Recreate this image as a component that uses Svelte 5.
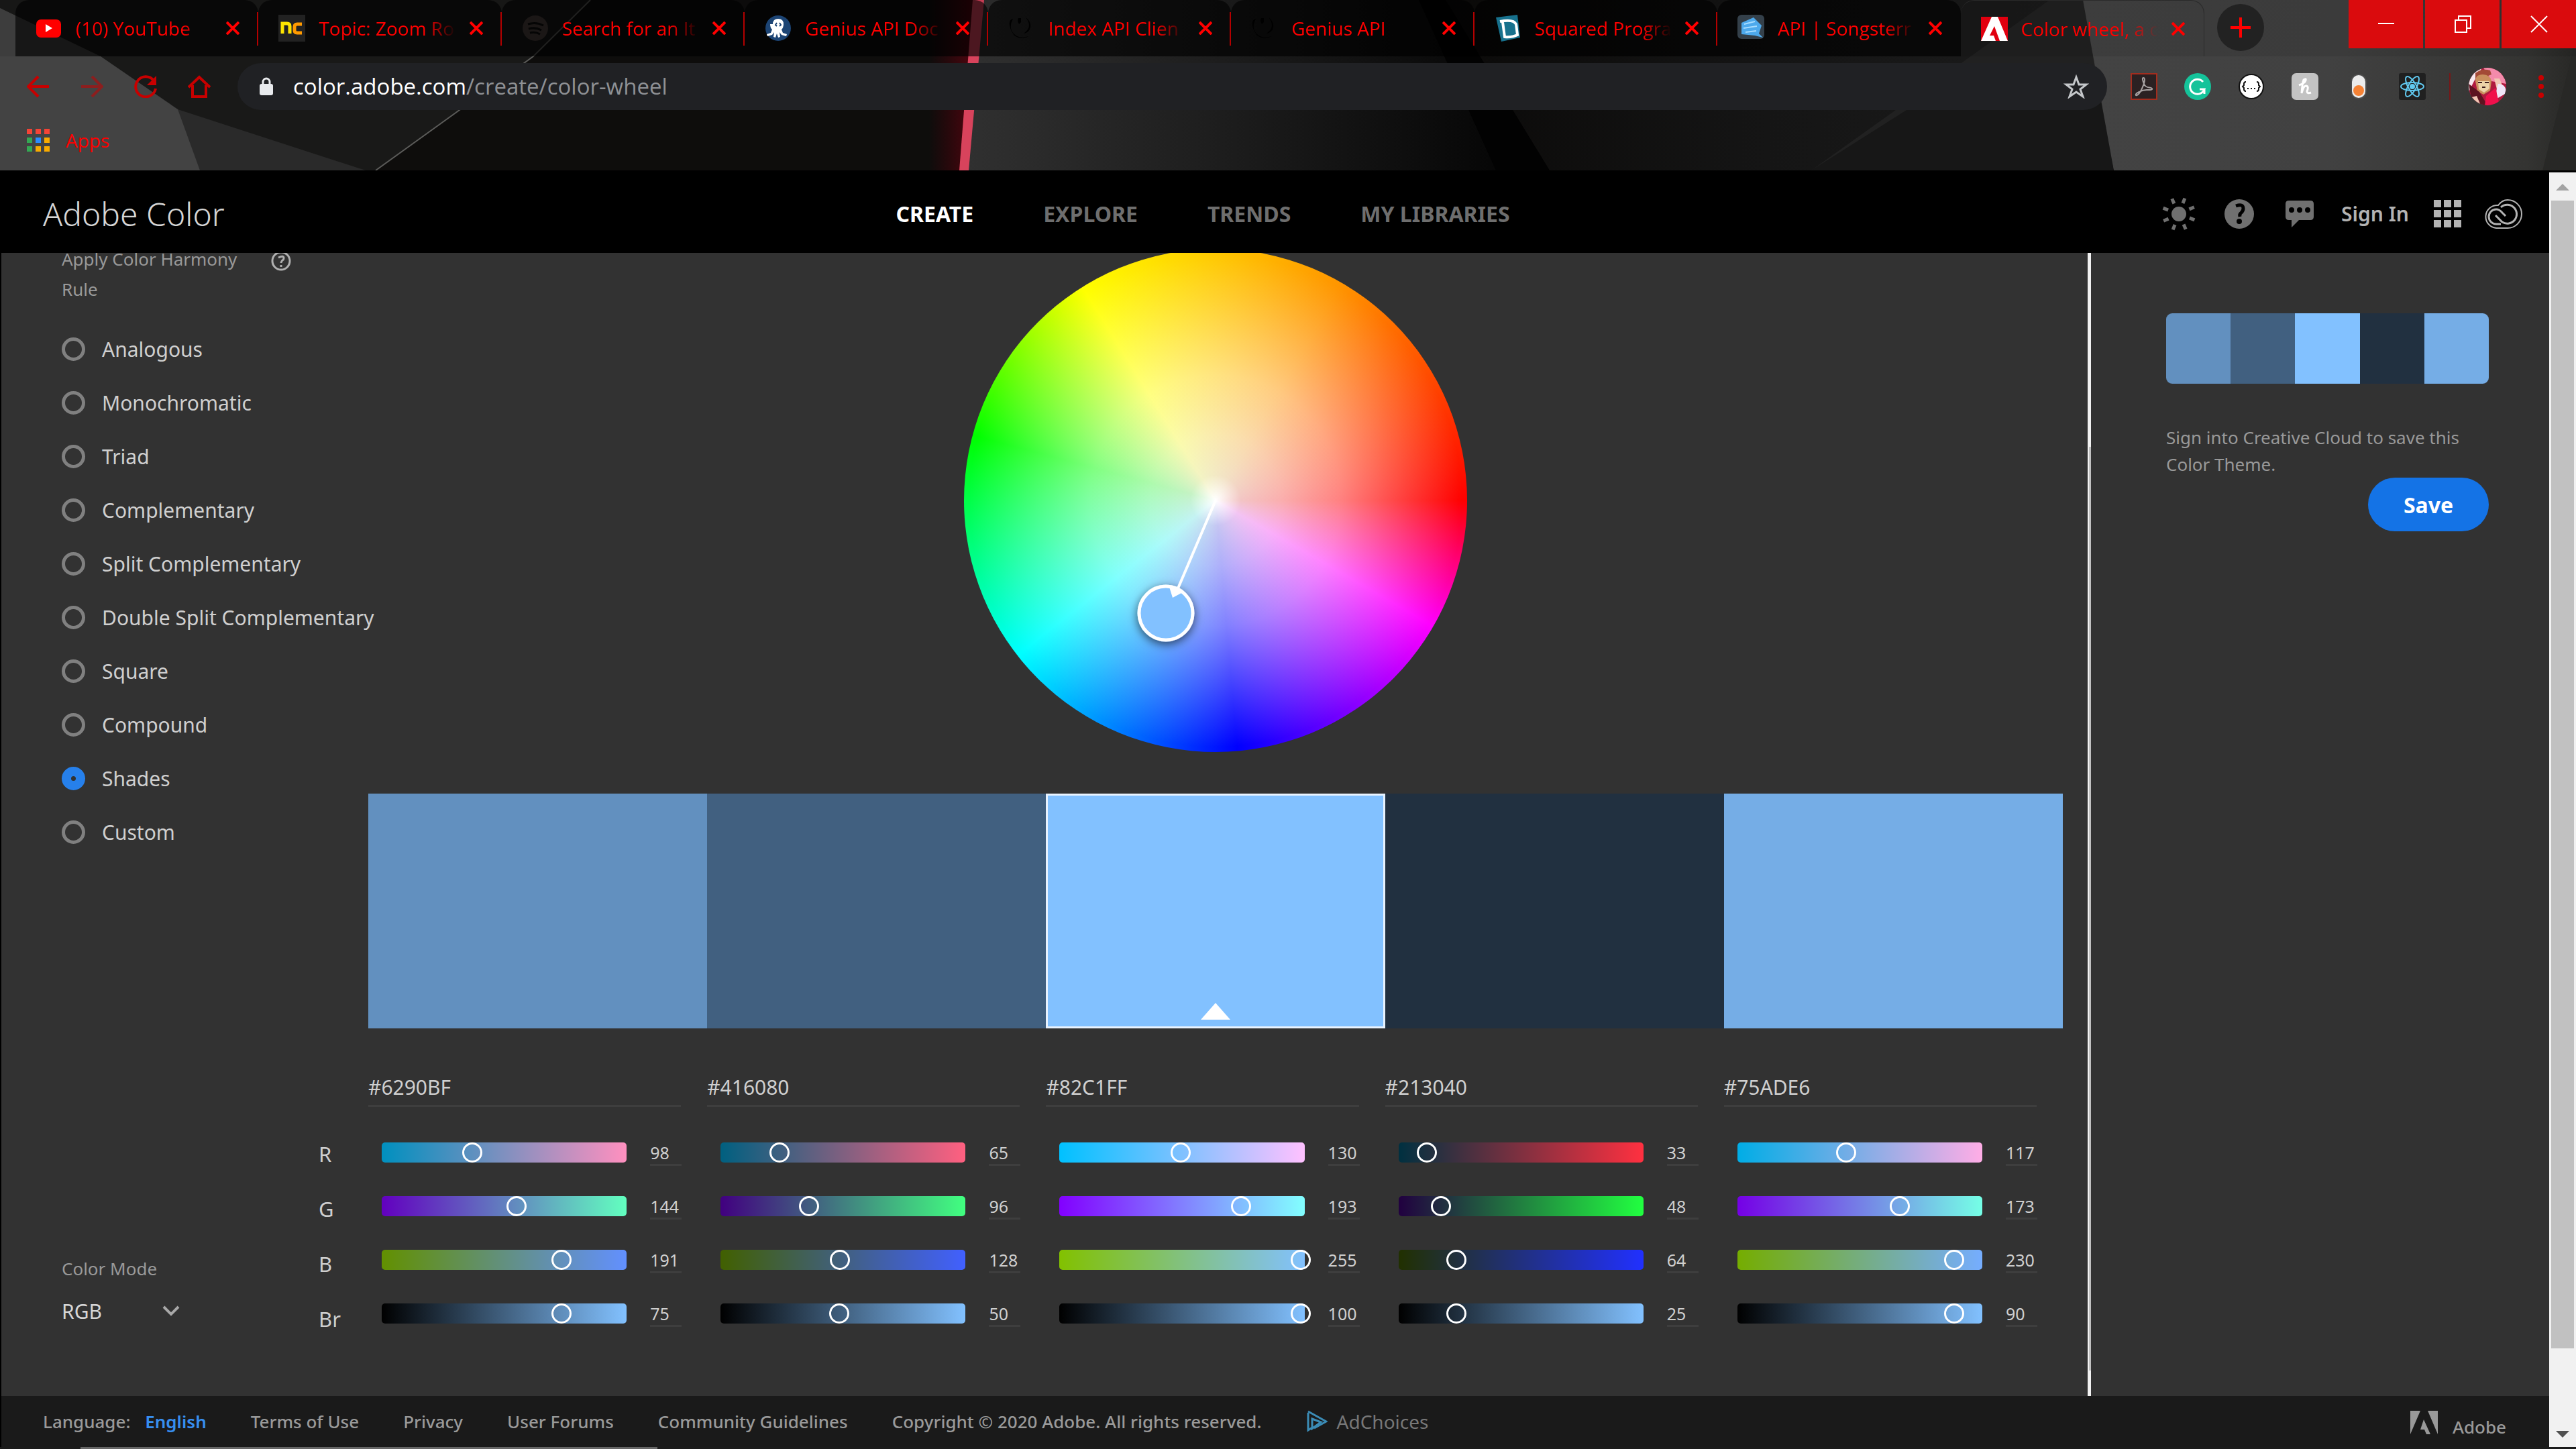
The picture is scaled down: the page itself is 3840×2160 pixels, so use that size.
<script>
  const tabs = [
    { title: '(10) YouTube', icon: 'youtube' },
    { title: 'Topic: Zoom Ro', icon: 'nc' },
    { title: 'Search for an It', icon: 'spotify' },
    { title: 'Genius API Doc', icon: 'octo' },
    { title: 'Index API Clien', icon: 'genius' },
    { title: 'Genius API', icon: 'genius' },
    { title: 'Squared Progra', icon: 'squared' },
    { title: 'API | Songsterr', icon: 'songsterr' },
    { title: 'Color wheel, a c', icon: 'adobe', active: true }
  ];

  const rules = ['Analogous', 'Monochromatic', 'Triad', 'Complementary', 'Split Complementary',
    'Double Split Complementary', 'Square', 'Compound', 'Shades', 'Custom'];
  let rule = $state('Shades');

  const theme = [
    { hex: '#6290BF', rgb: [98, 144, 191], br: 75 },
    { hex: '#416080', rgb: [65, 96, 128], br: 50 },
    { hex: '#82C1FF', rgb: [130, 193, 255], br: 100, base: true },
    { hex: '#213040', rgb: [33, 48, 64], br: 25 },
    { hex: '#75ADE6', rgb: [117, 173, 230], br: 90 }
  ];
  const channels = ['R', 'G', 'B', 'Br'];

  function track(color, i) {
    if (i === 3) return 'linear-gradient(to right, #000, #82c1ff)';
    const lo = [...color.rgb];
    const hi = [...color.rgb];
    lo[i] = 0;
    hi[i] = 255;
    return `linear-gradient(to right, rgb(${lo}), rgb(${hi}))`;
  }
  const level = (color, i) => (i === 3 ? color.br : color.rgb[i]);

  const nav = ['CREATE', 'EXPLORE', 'TRENDS', 'MY LIBRARIES'];
  const links = ['Terms of Use', 'Privacy', 'User Forums', 'Community Guidelines'];
  const dots = [0, 1, 2];
  const appColors = ['#f44336', '#f44336', '#f44336', '#34a853', '#2a8cff', '#f9ab00', '#34a853', '#f9ab00', '#f9ab00'];
</script>

{#snippet favicon(name)}
  <svg class="fav" viewBox="0 0 40 40" aria-hidden="true">
    {#if name === 'youtube'}
      <rect x="1" y="7" width="37" height="27" rx="7" fill="#f00" />
      <path d="M15 14v12l10-6z" fill="#fff" />
    {:else if name === 'nc'}
      <rect width="40" height="40" fill="#222" />
      <path d="M6 28V13h7q4 0 4 4v11" fill="none" stroke="#fde400" stroke-width="5" />
      <path d="M35 14h-7q-4 0-4 4v5q0 4 4 4h7" fill="none" stroke="#ff9a00" stroke-width="5" />
    {:else if name === 'spotify'}
      <circle cx="20" cy="20" r="19" fill="#1b1716" />
      <path d="M9 14q12-4 23 2M10 21q10-3 19 2M12 27q8-2 15 2" fill="none" stroke="#050505" stroke-width="3" />
    {:else if name === 'octo'}
      <circle cx="20" cy="20" r="19" fill="#1c4474" />
      <path d="M12 14q0-8 8-8t8 8q0 5-3 8l2 5 6 2-1 3-7-2-3-4 1 7-3 1-2-6-2 6-3-1 1-7-3 4-7 2-1-3 6-2 2-5q-3-3-3-8z" fill="#fff" />
      <path d="M18 12l-2 3 2 2M22 12l2 3-2 2" fill="none" stroke="#1c4474" stroke-width="2" />
    {:else if name === 'genius'}
      <path d="M7 6q-7 13 1 22t23 4q-8 4-16 2T3 20t4-14zM15 5h4v6l-3 3q-3-4-1-9zM26 4q8 6 7 14t-10 10q8-6 8-12t-5-12z" fill="#000" />
    {:else if name === 'squared'}
      <path d="M2 4l32-4 4 34-28 6z" fill="#17718d" />
      <path d="M8 10q20-4 24 4l2 16q-8 4-19 3l-3-22" fill="none" stroke="#fff" stroke-width="4" />
    {:else if name === 'songsterr'}
      <rect width="40" height="36" rx="6" fill="#34404a" />
      <path d="M6 12l18-8 12 12-4 12 6 6-12-3-20-2z" fill="#4da9ec" />
      <path d="M10 14l16-4M9 20l20-3M12 26l16-2" stroke="#a6dcff" stroke-width="2" />
    {:else}
      <rect y="2" width="40" height="36" fill="#fff" />
      <path d="M0 2h16L0 38zM40 2v36L25 2zM20 16l8 22h-6l-3-8h-6z" fill="#e1000f" />
    {/if}
  </svg>
{/snippet}

<div class="app">
  <header class="browser">
    <svg class="skin" viewBox="0 0 3840 254" preserveAspectRatio="none" aria-hidden="true">
      <defs>
        <linearGradient id="slab"><stop offset="0" stop-color="#303030" /><stop offset="0.5" stop-color="#1c1c1c" /><stop offset="1" stop-color="#060606" /></linearGradient>
        <linearGradient id="far"><stop offset="0" stop-color="#0a0908" /><stop offset="0.5" stop-color="#151515" /><stop offset="1" stop-color="#1c1c1c" /></linearGradient>
        <linearGradient id="steel"><stop offset="0" stop-color="#434343" /><stop offset="0.5" stop-color="#414141" /><stop offset="0.9" stop-color="#343432" /><stop offset="1" stop-color="#282826" /></linearGradient>
        <linearGradient id="glow"><stop offset="0" stop-color="#4a000a" stop-opacity="0" /><stop offset="1" stop-color="#5a0510" /></linearGradient>
      </defs>
      <rect width="3840" height="254" fill="#0e0d0c" />
      <path d="M0 0H880L795 84L685 164L560 254H0z" fill="#191918" />
      <path d="M0 12L265 163L545 254H0z" fill="#2a2a2a" />
      <path d="M0 12L150 84L265 163L298 254H0z" fill="#434343" />
      <path d="M880 0L795 84L685 164L560 254" fill="none" stroke="#5c5c5a" stroke-width="2" />
      <path d="M1385 0H1460L1436 254H1385z" fill="url(#glow)" />
      <path d="M1462 0H2115L2240 254H1440z" fill="url(#slab)" />
      <path d="M1450 0h17l-23 254h-14z" fill="#d8435c" />
      <path d="M2115 0H3110L3150 254H2310z" fill="url(#far)" />
      <path d="M2115 0h40l155 254h-80z" fill="#020202" />
      <path d="M3055 0H3110L3150 254H2700z" fill="#212121" />
      <path d="M2880 140H3140L3150 254H2700z" fill="#171717" />
      <path d="M3105 0H3840V254H3151z" fill="url(#steel)" />
      <path d="M3840 60V254H3790z" fill="#282826" />
    </svg>
    <div class="strip">
      <div class="tabs">
        {#each tabs as tab}
          <div class="tab" class:active={tab.active}>
            {@render favicon(tab.icon)}
            <button class="title">{tab.title}</button>
            <button class="close" aria-label={`Close ${tab.title}`}>
              <svg viewBox="0 0 20 20"><path d="M1 1l18 18M19 1L1 19" /></svg>
            </button>
          </div>
        {/each}
      </div>
      <button class="newtab" aria-label="New tab">
        <svg viewBox="0 0 30 30"><path d="M15 0v30M0 15h30" /></svg>
      </button>
      <div class="window">
        <button aria-label="Minimize"><svg viewBox="0 0 26 26"><path d="M1 12h24" /></svg></button>
        <button aria-label="Restore"><svg viewBox="0 0 26 26"><path d="M2 7h17v18H2zM7 7V1h18v18h-6" /></svg></button>
        <button aria-label="Close window"><svg viewBox="0 0 26 26"><path d="M1 1l24 24M25 1L1 25" /></svg></button>
      </div>
    </div>
    <div class="toolbar">
      <div class="moves">
        <button aria-label="Back"><svg viewBox="0 0 34 34"><path d="M33 17H3M17 2L2 17l15 15" /></svg></button>
        <button aria-label="Forward" class="dim"><svg viewBox="0 0 34 34"><path d="M1 17h30M17 2l15 15-15 15" /></svg></button>
        <button aria-label="Reload"><svg viewBox="0 0 34 34"><path d="M29 8A15 15 0 1 0 32 20" /><path class="solid" d="M33 1v14H19z" /></svg></button>
        <button aria-label="Home"><svg viewBox="0 0 34 34"><path d="M7 15v17h20V15M1 18L17 3l16 15" /></svg></button>
      </div>
      <div class="address">
        <svg class="lock" viewBox="0 0 20 28" aria-hidden="true"><rect y="10" width="20" height="17" rx="3" fill="#e8eaed" /><path d="M5 11V7a5 5 0 0 1 10 0v4" fill="none" stroke="#e8eaed" stroke-width="3" /></svg>
        <p class="url"><b>color.adobe.com</b>/create/color-wheel</p>
        <button class="star" aria-label="Bookmark this page">
          <svg viewBox="0 0 38 36"><path d="M19 4l4 11h11l-9 7 4 11-10-7-10 7 4-11-9-7h11z" fill="none" stroke="#c4c7ca" stroke-width="3" /></svg>
        </button>
      </div>
      <div class="extensions">
        <button aria-label="Acrobat"><svg viewBox="0 0 40 40"><rect x="1" y="1" width="38" height="38" fill="#2b2122" stroke="#a32d1e" stroke-width="2" /><path d="M19 7c4 0 1 10-2 16-3 7-7 11-9 10-2-3 9-8 16-8 6 0 9 0 8-2-2-3-9 1-12-7-2-5-3-9-1-9z" fill="none" stroke="#a8a2a2" stroke-width="2" /></svg></button>
        <button aria-label="Grammarly"><svg viewBox="0 0 40 40"><circle cx="20" cy="20" r="20" fill="#15c39a" /><path d="M28 13a11 11 0 1 0 2 11H23M30 24v7" fill="none" stroke="#fff" stroke-width="3" /></svg></button>
        <button aria-label="JSON viewer"><svg viewBox="0 0 40 40"><circle cx="20" cy="20" r="18" fill="#fff" stroke="#111" stroke-width="2" /><path d="M12 13q-3 0-3 3v2l-2 2 2 2v2q0 3 3 3M28 13q3 0 3 3v2l2 2-2 2v2q0 3-3 3M14 23h2M19 23h2M24 23h2" fill="none" stroke="#111" stroke-width="2" /></svg></button>
        <button aria-label="Honey"><svg viewBox="0 0 40 40"><rect width="40" height="40" rx="7" fill="#c3c3c3" /><path d="M11 18q9-3 10-7t-3-1q-2 5-3 20 3-12 7-11t1 8q0 4 6 2" fill="none" stroke="#fff" stroke-width="3" /></svg></button>
        <button aria-label="Toggle"><svg viewBox="0 0 40 40"><rect x="8" y="1" width="24" height="38" rx="12" fill="#4c4c4c" /><rect x="10" y="3" width="20" height="34" rx="10" fill="#ececec" /><circle cx="20" cy="26" r="8" fill="#f58235" /></svg></button>
        <button aria-label="React tools"><svg viewBox="0 0 40 40"><rect width="40" height="40" rx="3" fill="#202020" /><g fill="none" stroke="#61c9f0" stroke-width="2"><ellipse cx="20" cy="20" rx="17" ry="6" /><ellipse cx="20" cy="20" rx="17" ry="6" transform="rotate(60 20 20)" /><ellipse cx="20" cy="20" rx="17" ry="6" transform="rotate(120 20 20)" /></g><circle cx="20" cy="20" r="4" fill="#61c9f0" /></svg></button>
      </div>
      <span class="rule"></span>
      <button class="avatar" aria-label="Profile">
        <svg viewBox="0 0 56 56">
          <defs><clipPath id="face"><circle cx="28" cy="28" r="28" /></clipPath></defs>
          <g clip-path="url(#face)">
            <rect width="56" height="56" fill="#b01a3f" />
            <path d="M22 0h34v24L34 20z" fill="#f48bab" />
            <path d="M0 0h20L8 20 0 36z" fill="#f7e9ee" />
            <path d="M10 8q10-8 22-4l2 6-24 10z" fill="#a34a36" />
            <path d="M10 20q0-10 11-10t13 10l-2 14-10 6-9-5z" fill="#c98f5d" />
            <path d="M14 20h17v11l-8 6-8-5z" fill="#ecd3a8" />
            <path d="M14 22h6M24 22h6M20 29h5" stroke="#3b1c1c" stroke-width="2" />
            <path d="M38 16l8 0 4 10-8 6z" fill="#f2c6b4" />
            <path d="M44 24q12 0 12 14l-14 8q-2-14 2-22z" fill="#efe6f8" />
            <path d="M0 24l16 12 12 20H6z" fill="#5c1420" />
            <path d="M4 44l8-2 6 14H8z" fill="#f2c6b4" />
            <path d="M26 42l14-12 6 26H24z" fill="#f0104c" />
          </g>
        </svg>
      </button>
      <button class="menu" aria-label="Menu"><svg viewBox="0 0 8 34"><circle cx="4" cy="4" r="4" /><circle cx="4" cy="17" r="4" /><circle cx="4" cy="30" r="4" /></svg></button>
    </div>
    <div class="bookmarks">
      <a href="#apps">
        <svg viewBox="0 0 34 34" aria-hidden="true">
          {#each appColors as c, i}
            <rect x={(i % 3) * 13} y={Math.floor(i / 3) * 13} width="8" height="8" fill={c} />
          {/each}
        </svg>
        Apps
      </a>
    </div>
  </header>

  <div class="viewport">
    <div class="page">
      <header class="top">
        <a class="logo" href="#home">Adobe Color</a>
        <nav>
          {#each nav as item, i}
            <a href="#{item}" class:current={i === 0}>{item}</a>
          {/each}
        </nav>
        <div class="tools">
          <button aria-label="Appearance">
            <svg class="sun" viewBox="0 0 50 50">
              <circle cx="25" cy="25" r="11" />
              {#each [22, 67, 112, 157, 202, 247, 292, 337] as a}
                <rect x="22" y="0" width="5" height="8" transform="rotate({a} 25 25)" />
              {/each}
            </svg>
          </button>
          <button aria-label="Help">
            <svg class="help" viewBox="0 0 44 44"><circle cx="22" cy="22" r="22" /><path d="M17 10q11-4 11 4 0 3-3 6-3 2-2 6" fill="none" stroke="#000" stroke-width="5" /><circle cx="22" cy="33" r="4" fill="#000" /></svg>
          </button>
          <button aria-label="Feedback">
            <svg class="chat" viewBox="0 0 42 42"><path d="M5 1h32q5 0 5 5v19q0 5-5 5H20L9 41V30H5q-5 0-5-5V6q0-5 5-5z" />{#each dots as d}<circle cx={9 + d * 12} cy="15" r="4" fill="#000" />{/each}</svg>
          </button>
          <button class="signin">Sign In</button>
          <button aria-label="Apps">
            <svg class="grid" viewBox="0 0 41 41">{#each dots as r}{#each dots as c}<rect x={c * 15} y={r * 15} width="11" height="11" />{/each}{/each}</svg>
          </button>
          <button aria-label="Creative Cloud">
            <svg class="cloud" viewBox="0 0 56 44"><g fill="none" stroke="#b3b3b3"><path stroke-width="2" d="M17 43A16 16 0 0 1 20 9Q26 1 34 1a21 21 0 0 1 0 42z" /><path stroke-width="3" d="M24 37h-7a11 11 0 0 1 0-22q5 0 9 5l5 5M24 12a14 14 0 1 1 2 22L16 24" /></g></svg>
          </button>
        </div>
      </header>

      <main>
        <aside class="sidebar">
          <div class="heading">
            <h2>Apply Color Harmony Rule</h2>
            <button aria-label="About harmony rules"><svg viewBox="0 0 30 30"><circle cx="15" cy="15" r="13" /><path d="M11 10q8-4 8 1 0 2-2 3-2 2-2 4M15 21v3" /></svg></button>
          </div>
          <div class="rules" role="radiogroup" aria-label="Harmony rule">
            {#each rules as name}
              <label><input type="radio" name="rule" value={name} bind:group={rule} />{name}</label>
            {/each}
          </div>
          <div class="mode">
            <label for="mode">Color Mode</label>
            <div class="picker">
              <select id="mode"><option>RGB</option><option>CMYK</option><option>LAB</option></select>
              <svg viewBox="0 0 26 16" aria-hidden="true"><path d="M2 2l11 11L24 2" /></svg>
            </div>
          </div>
        </aside>

        <section class="canvas">
          <div class="wheelzone">
            <div class="wheel">
              <svg viewBox="0 0 750 750" aria-hidden="true">
                <defs><filter id="drop" x="-50%" y="-50%" width="200%" height="200%"><feDropShadow dx="0" dy="4" stdDeviation="7" flood-color="#000" flood-opacity="0.6" /></filter></defs>
                <circle cx="301" cy="543" r="40" fill="#82c1ff" stroke="#fff" stroke-width="5" filter="url(#drop)" />
                <path d="M375 375L319 506" stroke="#fff" stroke-width="4" />
                <path d="M306 504l20 8-15 8z" fill="#fff" />
              </svg>
            </div>
          </div>
          <div class="editor">
            <div class="channels">
              {#each channels as ch}<span>{ch}</span>{/each}
            </div>
            {#each theme as color}
              <div class="color">
                <button class="swatch" class:base={color.base} style="background: {color.hex}" aria-label={color.hex}>
                  {#if color.base}<svg viewBox="0 0 44 25"><path d="M22 0l22 25H0z" fill="#fff" /></svg>{/if}
                </button>
                <input class="hex" value={color.hex} aria-label="Hex value" />
                {#each channels as ch, i}
                  <div class="slider">
                    <div class="track" style="background: {track(color, i)}">
                      <input type="range" min="0" max={i === 3 ? 100 : 255} value={level(color, i)} aria-label={`${ch} of ${color.hex}`} />
                    </div>
                    <input class="value" value={level(color, i)} aria-label={`${ch} value of ${color.hex}`} />
                  </div>
                {/each}
              </div>
            {/each}
          </div>
        </section>

        <div class="divider"><span></span></div>

        <aside class="panel">
          <div class="palette">
            {#each theme as color}<span style="background: {color.hex}"></span>{/each}
          </div>
          <p>Sign into Creative Cloud to save this Color Theme.</p>
          <button class="save">Save</button>
        </aside>
      </main>

      <footer>
        <span class="lang">Language: <a href="#english">English</a></span>
        {#each links as link}<a href="#{link}">{link}</a>{/each}
        <span>Copyright © 2020 Adobe. All rights reserved.</span>
        <a class="choices" href="#adchoices">
          <svg viewBox="0 0 32 36" aria-hidden="true"><path d="M3 5v26l6-4V14l13 5-15 11" fill="none" stroke="#3b8bb5" stroke-width="3" /><path d="M3 3l27 15-18 10" fill="none" stroke="#3b8bb5" stroke-width="3" /></svg>
          AdChoices
        </a>
        <a class="brand" href="#adobe">
          <svg viewBox="0 0 41 35" aria-hidden="true"><path d="M0 0h15L0 35zM41 0v35L26 0zM20 13l10 22h-6l-3-7h-6z" fill="#999" /></svg>
          Adobe
        </a>
      </footer>
    </div>
    <div class="scrollbar" aria-hidden="true">
      <svg viewBox="0 0 20 10"><path d="M10 0l10 10H0z" fill="#a3a3a3" /></svg>
      <span></span>
      <svg viewBox="0 0 20 10"><path d="M10 10L0 0h20z" fill="#505050" /></svg>
    </div>
  </div>
  <div class="taskbar"><span></span></div>
</div>

<style>
  :global(body) { margin: 0; background: #323232; }
  .app, .app * { box-sizing: border-box; }
  .app { display: flex; flex-direction: column; min-height: 100vh; overflow: hidden; font-family: "Noto Sans", "Open Sans", sans-serif; font-size: 28px; color: #cfcfcf; }
  button { border: 0; padding: 0; margin: 0; background: none; font: inherit; color: inherit; display: flex; align-items: center; justify-content: center; }
  a { color: inherit; text-decoration: none; }
  svg { display: block; flex: none; }
  h2, p { margin: 0; font-weight: 400; }

  /* browser frame */
  .browser { position: relative; height: 254px; color: #f00; font-family: "Open Sans", "Noto Sans", sans-serif; }
  .skin { position: absolute; inset: 0; width: 100%; height: 100%; }
  .strip { position: relative; display: flex; height: 84px; padding-left: 23px; background: rgba(0, 0, 0, 0.08); }
  .tabs { display: flex; flex: 1; min-width: 0; }
  .tab { position: relative; flex: 1; min-width: 0; display: flex; align-items: center; gap: 20px; padding: 0 28px 0 30px; background: rgba(0, 0, 0, 0.62); border-radius: 20px 20px 0 0; }
  .tab:not(.active)::after { content: ""; position: absolute; right: 0; top: 18px; width: 2px; height: 50px; background: #b40000; }
  .tab:nth-last-child(2)::after { display: none; }
  .active { background: none; border: 1px solid #2a2a2a; border-bottom: 0; border-left: 0; }
  .fav { width: 40px; height: 40px; }
  .title { flex: 1; min-width: 0; justify-content: flex-start; overflow: hidden; white-space: nowrap; font-size: 28px; line-height: 44px; mask-image: linear-gradient(to right, #000 78%, transparent); }
  .close svg { width: 20px; height: 20px; stroke: #f00; stroke-width: 4; }
  .newtab { width: 70px; height: 70px; margin: 6px 126px 0 19px; border-radius: 50%; background: #222; }
  .newtab svg { width: 30px; height: 30px; stroke: #f00; stroke-width: 4; }
  .window { display: flex; gap: 3px; height: 72px; }
  .window button { width: 111px; background: #da0b0d; }
  .window svg { width: 26px; height: 26px; fill: none; stroke: #fff; stroke-width: 2; }
  .toolbar { position: relative; display: flex; align-items: center; height: 90px; padding: 0 48px 0 40px; }
  .moves { display: flex; gap: 46px; width: 314px; }
  .moves svg { width: 34px; height: 34px; fill: none; stroke: #c80000; stroke-width: 4; }
  .moves .solid { fill: #c80000; stroke: none; }
  .dim { opacity: 0.55; }
  .address { flex: 1; display: flex; align-items: center; height: 70px; padding: 0 27px 0 33px; border-radius: 35px; background: #202124; }
  .lock { width: 20px; height: 28px; }
  .url { flex: 1; margin-left: 30px; font-size: 33px; line-height: 44px; color: #8f9195; }
  .url b { font-weight: 400; color: #fff; }
  .star svg { width: 38px; height: 36px; }
  .extensions { display: flex; gap: 40px; margin-left: 35px; }
  .extensions svg { width: 40px; height: 40px; }
  .rule { width: 2px; height: 40px; margin: 0 27px 0 35px; background: #751818; }
  .avatar svg { width: 56px; height: 56px; }
  .menu { margin-left: 48px; }
  .menu svg { width: 8px; height: 34px; fill: #c80000; }
  .bookmarks { position: relative; display: flex; align-items: center; height: 70px; padding-left: 40px; }
  .bookmarks a { display: flex; align-items: center; gap: 24px; font-size: 28px; line-height: 40px; }
  .bookmarks svg { width: 34px; height: 34px; }

  /* page */
  .viewport { flex: 1; display: flex; background: #000; }
  .page { flex: 1; min-width: 0; display: flex; flex-direction: column; border-left: 2px solid #000; }
  .top { display: flex; align-items: center; height: 123px; padding: 6px 40px 0 62px; background: #000; }
  .logo { flex: 0 0 34.4%; font-size: 48px; font-weight: 300; line-height: 60px; color: #d6d6d6; }
  nav { display: flex; gap: 104px; font-size: 32px; font-weight: 700; color: #6e6e6e; line-height: 40px; }
  .current { color: #fff; }
  .tools { display: flex; align-items: center; margin-left: auto; color: #b3b3b3; fill: #707070; }
  .sun { width: 50px; height: 50px; margin-right: 43px; }
  .help { width: 44px; height: 44px; margin-right: 47px; }
  .chat { width: 42px; height: 42px; margin-right: 41px; }
  .signin { font-size: 30px; font-weight: 600; line-height: 40px; margin-right: 37px; }
  .grid { width: 41px; height: 41px; margin-right: 35px; fill: #b3b3b3; }
  .cloud { width: 56px; height: 44px; }

  main { flex: 1; display: flex; background: #323232; overflow: hidden; }
  .sidebar { flex: 0 0 470px; min-width: 0; display: flex; flex-direction: column; padding: 0 0 102px 90px; }
  .heading { display: flex; align-items: flex-start; margin-top: -13px; }
  .heading h2 { width: 312px; font-size: 26px; line-height: 45px; color: #999; }
  .heading svg { width: 30px; height: 30px; margin-top: 10px; fill: none; stroke: #b0b0b0; stroke-width: 3; }
  .rules { margin-top: 26px; display: flex; flex-direction: column; }
  .rules label { display: flex; align-items: center; gap: 25px; height: 80px; font-size: 30px; white-space: nowrap; }
  .rules input { appearance: none; width: 35px; height: 35px; margin: 0; flex: none; border: 5px solid #808080; border-radius: 50%; }
  .rules input:checked { border: 14px solid #2680eb; }
  .mode { margin-top: auto; }
  .mode label { display: block; font-size: 26px; line-height: 36px; color: #999; }
  .picker { display: flex; align-items: center; width: 176px; height: 50px; margin-top: 20px; }
  .picker select { appearance: none; flex: 1; min-width: 0; border: 0; padding: 0; background: none; font: inherit; font-size: 30px; color: #d6d6d6; }
  .picker svg { width: 26px; height: 16px; fill: none; stroke: #a8a8a8; stroke-width: 4; }

  .canvas { flex: 1; min-width: 0; padding-right: 37px; }
  .wheelzone { height: 806px; padding-left: 77px; overflow: hidden; }
  .wheel { width: 750px; height: 750px; margin: -6px auto 0; border-radius: 50%; background:
    radial-gradient(closest-side, #fff, rgba(240, 240, 240, 0.82) 10%, rgba(248, 248, 248, 0.7) 26%, rgba(255, 255, 255, 0.5) 50%, rgba(255, 255, 255, 0) 98%),
    conic-gradient(from 90deg, #f00, #f0f 30deg, #00f 85deg, #0ff 142deg, #0f0 195deg, #ff0 238deg, #ff9500 300deg, #f00); }
  .editor { display: grid; grid-template-columns: 77px repeat(5, minmax(0, 1fr)); }
  .channels { display: flex; flex-direction: column; padding: 496px 0 0 3px; font-size: 31px; line-height: 82px; }
  .swatch { width: 100%; height: 350px; align-items: flex-end; }
  .base { border: 3px solid #e8f3ff; padding-bottom: 10px; }
  .base svg { width: 44px; height: 25px; }
  .color input:not([type]) { border: 0; border-bottom: 3px solid #3e3e3e; border-radius: 0; padding: 0; background: none; color: #cfcfcf; font: inherit; }
  .color .hex:not([type]) { display: block; width: calc(100% - 39px); height: 50px; margin: 67px 0 28px; padding-bottom: 6px; font-size: 30px; }
  .slider { display: flex; align-items: center; gap: 35px; height: 80px; padding: 0 38px 0 20px; }
  .track { flex: 1; min-width: 0; height: 30px; border-radius: 5px; }
  .track input { appearance: none; display: block; width: calc(100% + 29px); height: 30px; margin: 0 0 0 -20px; background: none; }
  .track input::-webkit-slider-thumb { appearance: none; box-sizing: border-box; width: 30px; height: 30px; border: 3px solid #fff; border-radius: 50%; background: none; }
  .slider .value:not([type]) { width: 47px; height: 40px; padding-top: 2px; font-size: 25px; }

  .divider { flex: none; width: 5px; padding: 289px 0 38px 2px; background: #f1f1f1; }
  .divider span { display: block; height: 100%; background: #c1c1c1; }
  .panel { flex: 0 0 683px; display: flex; flex-direction: column; padding: 90px 90px 0 112px; }
  .palette { display: flex; height: 105px; border-radius: 9px; overflow: hidden; }
  .palette span { flex: 1; }
  .panel p { margin-top: 60px; font-size: 26px; line-height: 40px; color: #999; }
  .save { align-self: flex-end; width: 180px; height: 80px; border-radius: 40px; background: #1473e6; color: #fff; font-size: 32px; font-weight: 700; }

  footer { display: flex; align-items: center; gap: 66px; height: 76px; padding: 0 64px 0 62px; background: #1a1a1a; color: #999; font-size: 26px; font-weight: 500; white-space: nowrap; }
  .lang a { margin-left: 15px; color: #378ef0; font-weight: 600; }
  .choices { display: flex; align-items: center; gap: 14px; font-size: 28px; font-weight: 400; color: #777; }
  .choices svg { width: 32px; height: 36px; }
  .brand { display: flex; align-items: center; gap: 22px; margin-left: auto; padding-top: 16px; }
  .brand svg { width: 41px; height: 35px; margin-top: -14px; }

  .scrollbar { flex: none; width: 40px; margin-top: 3px; display: flex; flex-direction: column; align-items: center; background: #f1f1f1; padding: 17px 0 14px; }
  .scrollbar svg { width: 20px; height: 10px; }
  .scrollbar span { width: 34px; flex: 1; margin: 15px 0 123px; background: #c1c1c1; }
  .taskbar { height: 3px; padding-left: 120px; background: #1b1b1b; }
  .taskbar span { display: block; width: 860px; height: 3px; background: #666; }
</style>
